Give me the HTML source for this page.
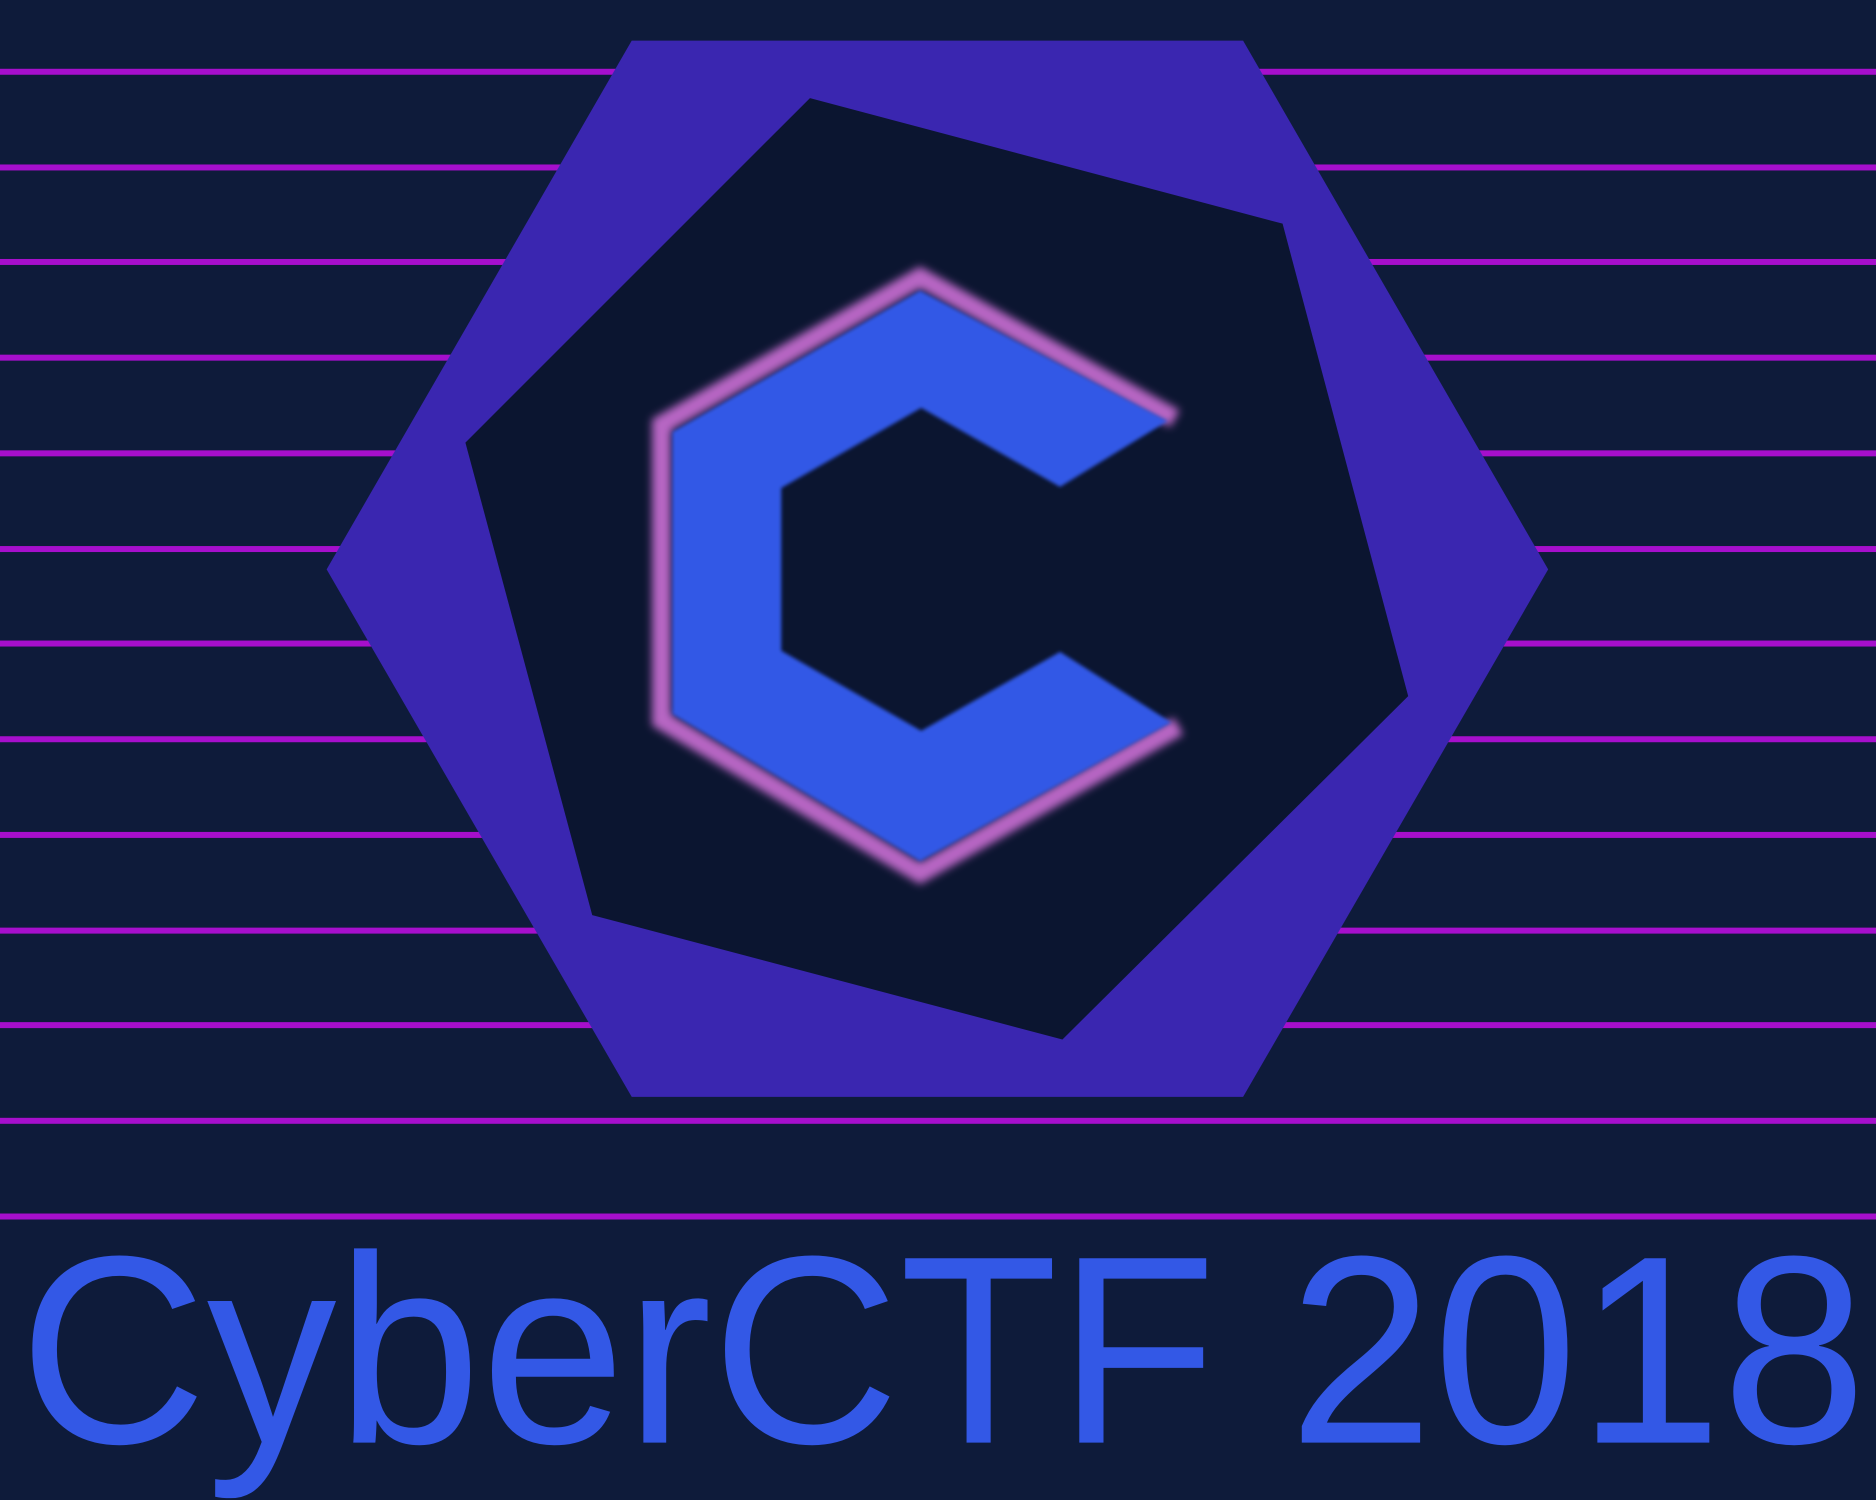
<!DOCTYPE html>
<html><head><meta charset="utf-8"><style>html,body{margin:0;padding:0;background:#0e1b3a;overflow:hidden}svg{display:block}</style></head><body>
<svg width="1876" height="1500" viewBox="0 0 1568 1254" preserveAspectRatio="none" xmlns="http://www.w3.org/2000/svg">
<defs><filter id="b" x="-20%" y="-20%" width="140%" height="140%"><feGaussianBlur stdDeviation="3.5"/></filter><filter id="c" x="-20%" y="-20%" width="140%" height="140%"><feGaussianBlur stdDeviation="1.5"/></filter></defs>
<rect width="1568" height="1254" fill="#0e1b3a"/>
<g fill="#a60fcc">
<rect y="57.5" width="1568" height="5"/><rect y="137.5" width="1568" height="5"/><rect y="216.5" width="1568" height="5"/><rect y="296.5" width="1568" height="5"/><rect y="376.5" width="1568" height="5"/><rect y="456.5" width="1568" height="5"/><rect y="535.5" width="1568" height="5"/><rect y="615.5" width="1568" height="5"/><rect y="695.5" width="1568" height="5"/><rect y="775.5" width="1568" height="5"/><rect y="854.5" width="1568" height="5"/><rect y="934.5" width="1568" height="5"/><rect y="1014.5" width="1568" height="5"/>
</g>
<polygon points="528,34 1039,34 1294,476 1039,917 528,917 273,476" fill="#3a26b0"/>
<polygon points="677,82 1072,187 1177,582 888,869 495,765 389,370" fill="#0b1530"/>
<g filter="url(#b)">
<polyline points="982,350 769,232 553,355 553,602 769,730 985,607" fill="none" stroke="#b866c4" stroke-width="16" stroke-linejoin="miter"/>
</g>
<polygon points="562,361 769,243 976,352 886,407 770,341 653,408 653,544 770,611 886,545 979,604 769,720 562,597" fill="#3358e6" filter="url(#c)"/>
<text x="16" y="1206" font-family="Liberation Sans, Arial, sans-serif" font-size="224" fill="#3358e6" textLength="1544" lengthAdjust="spacingAndGlyphs">CyberCTF 2018</text>
</svg>
</body></html>
